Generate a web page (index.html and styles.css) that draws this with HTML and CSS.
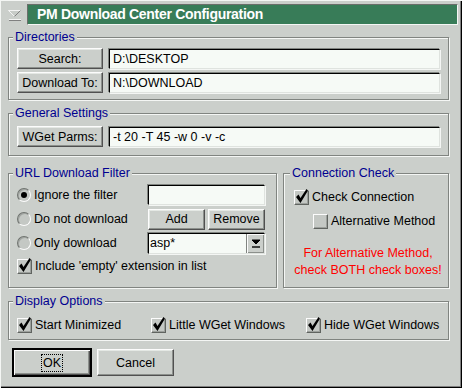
FILE: index.html
```html
<!DOCTYPE html>
<html lang="en">
<head>
    <meta charset="UTF-8">
    <meta name="viewport" content="width=device-width, initial-scale=1.0">
    <title>PM Download Center Configuration</title>
    <link rel="stylesheet" href="styles.css">
</head>
<body>

<div class="window">
    <!-- Title bar with system menu -->
    <div class="title-row">
        <span class="sysmenu">
            <svg width="14" height="11" viewBox="0 0 14 11">
                <path d="M0.5 0.5 H12.5 L6.5 6.5 Z" fill="#c8ccc8" stroke="#f4f4f4"/>
                <path d="M12.5 0.5 L6.5 6.5" stroke="#808080"/>
                <path d="M1 9.5 H13" stroke="#f4f4f4"/>
                <path d="M1 10.5 H13" stroke="#808080"/>
            </svg>
        </span>
        <div class="titlebar">PM Download Center Configuration</div>
    </div>

    <div class="dialog">
        <fieldset class="group dirs">
            <legend>Directories</legend>
            <div class="path-row">
                <button class="btn path-btn">Search:</button>
                <div class="field">D:\DESKTOP</div>
            </div>
            <div class="path-row">
                <button class="btn path-btn">Download To:</button>
                <div class="field">N:\DOWNLOAD</div>
            </div>
        </fieldset>

        <fieldset class="group general">
            <legend>General Settings</legend>
            <div class="path-row">
                <button class="btn path-btn">WGet Parms:</button>
                <div class="field">-t 20 -T 45 -w 0 -v -c</div>
            </div>
        </fieldset>

        <div class="middle">
            <fieldset class="group filter">
                <legend>URL Download Filter</legend>
                <div class="filter-grid">
                    <label class="opt"><span class="radio on"></span>Ignore the filter</label>
                    <div class="field filter-input"></div>
                    <label class="opt"><span class="radio"></span>Do not download</label>
                    <div class="add-remove">
                        <button class="btn small-btn">Add</button>
                        <button class="btn small-btn">Remove</button>
                    </div>
                    <label class="opt"><span class="radio"></span>Only download</label>
                    <div class="field combo">
                        <span class="combo-text">asp*</span>
                        <span class="combo-btn">
                            <svg width="10" height="9" viewBox="0 0 10 9">
                                <path d="M1 1 H9 L5 5 Z" fill="#000" stroke="#000"/>
                                <path d="M1 8 H9" stroke="#000" stroke-width="1.4"/>
                            </svg>
                        </span>
                    </div>
                </div>
                <label class="opt include">
                    <span class="check"><svg viewBox="0 0 15 15"><path d="M2 8 L4.5 5.5 L6.5 9 L12.5 0 L14 1.5 L6.5 14 Z"/></svg></span>Include 'empty' extension in list
                </label>
            </fieldset>

            <fieldset class="group conn">
                <legend>Connection Check</legend>
                <label class="opt first-check">
                    <span class="check"><svg viewBox="0 0 15 15"><path d="M2 8 L4.5 5.5 L6.5 9 L12.5 0 L14 1.5 L6.5 14 Z"/></svg></span>Check Connection
                </label>
                <label class="opt alt-check">
                    <span class="check"></span>Alternative Method
                </label>
                <p class="warning">For Alternative Method,<br>check BOTH check boxes!</p>
            </fieldset>
        </div>

        <fieldset class="group display">
            <legend>Display Options</legend>
            <div class="display-row">
                <label class="opt"><span class="check"><svg viewBox="0 0 15 15"><path d="M2 8 L4.5 5.5 L6.5 9 L12.5 0 L14 1.5 L6.5 14 Z"/></svg></span>Start Minimized</label>
                <label class="opt"><span class="check"><svg viewBox="0 0 15 15"><path d="M2 8 L4.5 5.5 L6.5 9 L12.5 0 L14 1.5 L6.5 14 Z"/></svg></span>Little WGet Windows</label>
                <label class="opt"><span class="check"><svg viewBox="0 0 15 15"><path d="M2 8 L4.5 5.5 L6.5 9 L12.5 0 L14 1.5 L6.5 14 Z"/></svg></span>Hide WGet Windows</label>
            </div>
        </fieldset>

        <div class="actions">
            <button class="btn default-btn"><span class="focus">OK</span></button>
            <button class="btn action-btn">Cancel</button>
        </div>
    </div>
</div>

</body>
</html>
```

FILE: styles.css
```css
body {
    margin: 0;
    font-family: "Liberation Sans", Arial, sans-serif;
    font-size: 12.5px;
    color: #000;
    background: #cbcfcb;
}
.window {
    width: 462px;
    height: 388px;
    box-sizing: border-box;
    background: #cbcfcb;
    box-shadow: inset 1px 1px 0 #f4f6f4, inset -1px -1px 0 #000, inset -2px -2px 0 #808080;
}

/* Title bar */
.title-row {
    display: flex;
    align-items: center;
    padding: 4px 4px 0 8px;
}
.sysmenu {
    width: 19px;
    height: 21px;
    display: flex;
    align-items: center;
    padding-top: 2px;
    box-sizing: border-box;
}
.titlebar {
    flex: 1;
    height: 21px;
    box-sizing: border-box;
    background: #387c58;
    color: #fff;
    font-weight: bold;
    font-size: 14px;
    letter-spacing: -0.3px;
    line-height: 19px;
    padding-left: 9px;
    border: 1px solid;
    border-color: #6a6e6a #f4f6f4 #f4f6f4 #6a6e6a;
}

/* Dialog body */
.dialog {
    padding: 5px 13px 0 8px;
}
.group {
    margin: 0;
    min-inline-size: 0;
    border: 1px solid #808480;
    box-shadow: 1px 1px 0 #f4f6f4, inset 1px 1px 0 #f4f6f4;
    padding: 3px 8px 6px 8px;
}
.group legend {
    color: #000090;
    line-height: 15px;
    padding: 0 2px;
    margin-left: -4px;
    background: #cbcfcb;
}

/* Buttons and fields */
.btn {
    font-family: inherit;
    font-size: 12.5px;
    color: #000;
    background: #cbcfcb;
    border: 1px solid;
    border-color: #fcfcfc #505050 #505050 #fcfcfc;
    box-shadow: inset -1px -1px 0 #8c908c, inset 1px 1px 0 #e4e8e4;
    padding: 0;
    cursor: pointer;
}
.field {
    background: #f6faf6;
    border: 1px solid;
    border-color: #000 #dfe3df #dfe3df #000;
    box-shadow: -1px -1px 0 #808480, 1px 1px 0 #f4f6f4;
    box-sizing: border-box;
    padding-left: 3px;
    line-height: 18px;
    white-space: nowrap;
}
.path-row {
    display: flex;
    align-items: center;
    gap: 6px;
    height: 21px;
    margin-bottom: 3px;
}
.path-row:last-child {
    margin-bottom: 0;
}
.path-btn {
    width: 86px;
    height: 21px;
}
.path-row .field {
    flex: 1;
    height: 20px;
}
.dirs .path-row:last-child {
    margin-top: 1px;
}

.general {
    margin-top: 6px;
    padding-top: 5px;
    padding-bottom: 8px;
}

/* URL filter and connection check */
.middle {
    display: flex;
    gap: 6px;
    margin-top: 10px;
}
.filter {
    width: 269px;
    box-sizing: border-box;
    padding: 2px 11px 10px 8px;
}
.conn {
    flex: 1;
    padding: 2px 6px 8px 10px;
}
.filter-grid {
    display: grid;
    grid-template-columns: 1fr 117px;
    grid-template-rows: 24px 24px 24px;
    align-items: center;
}
.opt {
    display: flex;
    align-items: center;
    gap: 3px;
    white-space: nowrap;
    line-height: 15px;
}
.radio {
    width: 14px;
    height: 14px;
    box-sizing: border-box;
    border-radius: 50%;
    background: #c4c8c4;
    border: 1px solid;
    border-color: #707470 #fcfcfc #fcfcfc #707470;
    box-shadow: inset 1px 1px 0 #a0a4a0;
    display: flex;
    align-items: center;
    justify-content: center;
}
.radio.on::after {
    content: "";
    width: 6px;
    height: 6px;
    border-radius: 50%;
    background: #000;
}
.filter-input {
    height: 20px;
}
.add-remove {
    display: flex;
    gap: 3px;
}
.small-btn {
    height: 21px;
    flex: 1;
}
.combo {
    height: 21px;
    display: flex;
    padding-left: 0;
}
.combo-text {
    flex: 1;
    padding-left: 1px;
}
.combo-btn {
    width: 17px;
    background: #cbcfcb;
    border-left: 1px solid #808480;
    box-shadow: inset 1px 1px 0 #fcfcfc, inset -1px -1px 0 #8c908c;
    display: flex;
    align-items: center;
    justify-content: center;
}
.check {
    width: 15px;
    height: 15px;
    box-sizing: border-box;
    background: #c4c8c4;
    border: 1px solid;
    border-color: #fcfcfc #606460 #606460 #fcfcfc;
    box-shadow: inset -1px -1px 0 #9ca09c;
    flex-shrink: 0;
}
.check svg {
    width: 15px;
    height: 15px;
    margin: -2px 0 0 -1px;
    display: block;
    fill: #000;
}
.include {
    margin-top: 4px;
}
.first-check {
    margin-top: 7px;
}
.alt-check {
    margin: 9px 0 0 19px;
}
.warning {
    color: #f00;
    text-align: center;
    line-height: 17px;
    margin: 16px 0 0 0;
}

/* Display options */
.display {
    margin-top: 6px;
    padding-top: 9px;
    padding-bottom: 6px;
}
.display-row {
    display: grid;
    grid-template-columns: 134px 155px auto;
}

/* Dialog buttons */
.actions {
    display: flex;
    align-items: center;
    gap: 5px;
    margin-top: 8px;
    padding-left: 4px;
}
.action-btn {
    width: 77px;
    height: 27px;
}
.default-btn {
    width: 80px;
    height: 29px;
    border: 2px solid #000;
    box-shadow: inset 1px 1px 0 #fcfcfc, inset -1px -1px 0 #505050, inset -2px -2px 0 #8c908c;
}
.focus {
    border: 1px dotted #000;
    padding: 1px 1px;
}
```
